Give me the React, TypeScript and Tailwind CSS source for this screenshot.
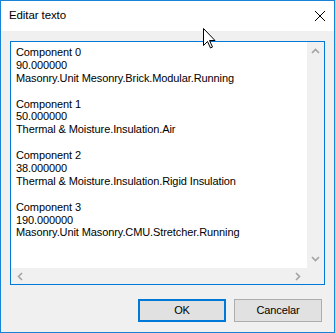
import React from 'react';

const lines = [
  'Component 0',
  '90.000000',
  'Masonry.Unit Mesonry.Brick.Modular.Running',
  '',
  'Component 1',
  '50.000000',
  'Thermal & Moisture.Insulation.Air',
  '',
  'Component 2',
  '38.000000',
  'Thermal & Moisture.Insulation.Rigid Insulation',
  '',
  'Component 3',
  '190.000000',
  'Masonry.Unit Masonry.CMU.Stretcher.Running',
];

const Chevron = ({ dir }: { dir: 'up' | 'down' | 'left' | 'right' }) => {
  const paths = {
    up: 'M1 5 L4.5 1.5 L8 5',
    down: 'M1 1 L4.5 4.5 L8 1',
    left: 'M5 1 L1.5 4.5 L5 8',
    right: 'M1 1 L4.5 4.5 L1 8',
  };
  const vertical = dir === 'up' || dir === 'down';
  return (
    <svg width={vertical ? 9 : 6} height={vertical ? 6 : 9} viewBox={vertical ? '0 0 9 6' : '0 0 6 9'}>
      <path d={paths[dir]} fill="none" stroke="#a3a3a3" strokeWidth={1.6} />
    </svg>
  );
};

// mouse pointer lying over the title bar
const Cursor = () => (
  <svg width="14" height="22" viewBox="0 0 14 22" className="absolute left-[202px] top-[27px]">
    <path
      d="M0.5 0.5 L0.5 17.5 L4.5 13.5 L7.5 20 L9.5 19 L6.5 12.5 L12 12.5 Z"
      fill="white"
      stroke="black"
      strokeWidth={1}
      strokeLinejoin="miter"
    />
  </svg>
);

export default function App() {
  return (
    <div
      className="relative w-[335px] h-[333px] border border-[#1883d7] bg-[#f0f0f0] flex flex-col text-black"
      style={{ fontFamily: '"Liberation Sans", Arial, sans-serif' }}
    >
      {/* title bar */}
      <div className="h-[30px] bg-white flex items-center justify-between pl-[8px] pr-[8px]">
        <span className="text-[11.5px] tracking-[-0.1px]">Editar texto</span>
        <svg width="10" height="10" viewBox="0 0 10 10" className="mr-[1px]">
          <path d="M0 0 L10 10 M10 0 L0 10" stroke="black" strokeWidth={1} />
        </svg>
      </div>

      {/* body */}
      <div className="flex-1 flex flex-col pt-[10px] pl-[9px] pr-[9px] pb-[10px]">
        <div className="h-[244px] border border-[#0078d7] bg-white grid grid-cols-[1fr_17px] grid-rows-[1fr_16px]">
          <div className="pl-[5px] pt-[4px] text-[11px] tracking-[-0.1px] leading-[12.9px] overflow-hidden whitespace-pre">
            {lines.map((l, i) => (
              <div key={i} className="h-[12.9px]">{l}</div>
            ))}
          </div>
          <div className="bg-[#f0f0f0] flex flex-col justify-between items-center py-[6px]">
            <Chevron dir="up" />
            <Chevron dir="down" />
          </div>
          <div className="bg-[#f0f0f0] flex justify-between items-center px-[6px]">
            <Chevron dir="left" />
            <Chevron dir="right" />
          </div>
          <div className="bg-[#f0f0f0]" />
        </div>

        <div className="mt-auto flex justify-end gap-[8px] pr-[3px]">
          <button className="w-[88px] h-[23px] bg-[#e1e1e1] border-2 border-[#0078d7] text-[11px] tracking-[-0.1px]">
            OK
          </button>
          <button className="w-[88px] h-[23px] bg-[#e1e1e1] border border-[#adadad] text-[11px] tracking-[-0.1px]">
            Cancelar
          </button>
        </div>
      </div>

      <Cursor />
    </div>
  );
}
